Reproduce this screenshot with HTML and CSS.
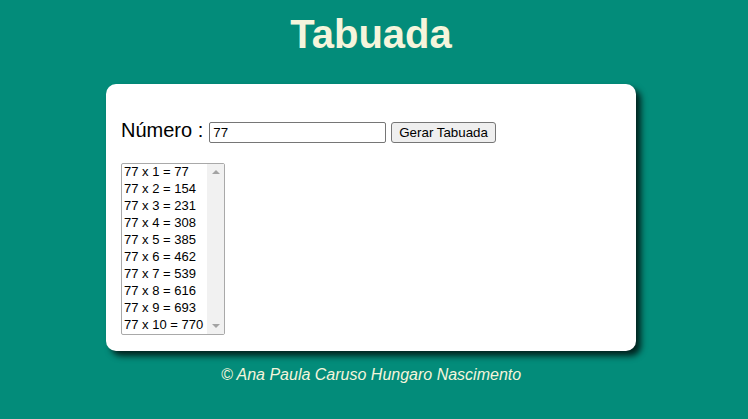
FILE: index.html
```html
<!DOCTYPE html>
<html lang="pt-BR">
<head>
<meta charset="utf-8">
<title>Tabuada</title>
<link rel="stylesheet" href="styles.css">
</head>
<body>
<h1 class="title">Tabuada</h1>
<main class="card">
  <div class="form-row">
    <label class="label" for="num">Número :</label>
    <input class="num-input" id="num" type="text" value="77">
    <button class="btn" type="button">Gerar Tabuada</button>
  </div>
  <div class="listbox" role="listbox">
    <div class="options">
      <div class="opt">77 x 1 = 77</div>
      <div class="opt">77 x 2 = 154</div>
      <div class="opt">77 x 3 = 231</div>
      <div class="opt">77 x 4 = 308</div>
      <div class="opt">77 x 5 = 385</div>
      <div class="opt">77 x 6 = 462</div>
      <div class="opt">77 x 7 = 539</div>
      <div class="opt">77 x 8 = 616</div>
      <div class="opt">77 x 9 = 693</div>
      <div class="opt">77 x 10 = 770</div>
    </div>
    <div class="scrollbar">
      <span class="arrow up"></span>
      <span class="arrow down"></span>
    </div>
  </div>
</main>
<footer class="footer">© Ana Paula Caruso Hungaro Nascimento</footer>
</body>
</html>
```

FILE: styles.css
```css
html, body {
  margin: 0;
  padding: 0;
}
body {
  background: #038c7a;
  font-family: "Liberation Sans", Arial, sans-serif;
  padding: 0 6px 0 0;
  min-height: 419px;
  box-sizing: border-box;
}
.title {
  margin: 11px 0 27px;
  font-size: 40px;
  line-height: 46px;
  font-weight: bold;
  text-align: center;
  color: #f5f5dc;
}
.card {
  display: block;
  width: 530px;
  height: 267px;
  box-sizing: border-box;
  margin: 0 auto;
  background: #fff;
  border-radius: 10px;
  box-shadow: 5px 5px 6px rgba(0, 0, 0, 0.75);
  padding: 35px 15px 16px;
}
.form-row {
  display: flex;
  align-items: baseline;
  margin-bottom: 20px;
}
.label {
  font-size: 20px;
  line-height: 23px;
  color: #000;
  margin-right: 6px;
}
.num-input {
  width: 177px;
  height: 21px;
  box-sizing: border-box;
  border: 1px solid #767676;
  border-radius: 2px;
  padding: 1px 3px;
  font-family: "Liberation Sans", Arial, sans-serif;
  font-size: 13.33px;
  color: #000;
  margin: 0 5px 0 0;
}
.btn {
  height: 21px;
  box-sizing: border-box;
  border: 1px solid #767676;
  border-radius: 3px;
  background: #efefef;
  padding: 1px 7px;
  font-family: "Liberation Sans", Arial, sans-serif;
  font-size: 13.33px;
  color: #000;
  margin: 0;
}
.listbox {
  display: flex;
  width: 104px;
  height: 172px;
  box-sizing: border-box;
  border: 1px solid #a9a9a9;
  border-radius: 2px;
}
.options {
  flex: 1;
  padding-left: 2px;
  margin-top: -1px;
}
.opt {
  font-size: 13px;
  line-height: 17px;
  color: #000;
  white-space: nowrap;
}
.scrollbar {
  width: 17px;
  background: #f1f1f1;
  display: flex;
  flex-direction: column;
  justify-content: space-between;
  align-items: center;
  padding: 6px 0;
  box-sizing: border-box;
}
.arrow {
  width: 0;
  height: 0;
  border-left: 4px solid transparent;
  border-right: 4px solid transparent;
}
.arrow.up {
  border-bottom: 4px solid #a3a3a3;
}
.arrow.down {
  border-top: 4px solid #a3a3a3;
}
.footer {
  margin-top: 15px;
  text-align: center;
  font-style: italic;
  font-size: 16px;
  line-height: 18px;
  color: #f5f5dc;
}
```
